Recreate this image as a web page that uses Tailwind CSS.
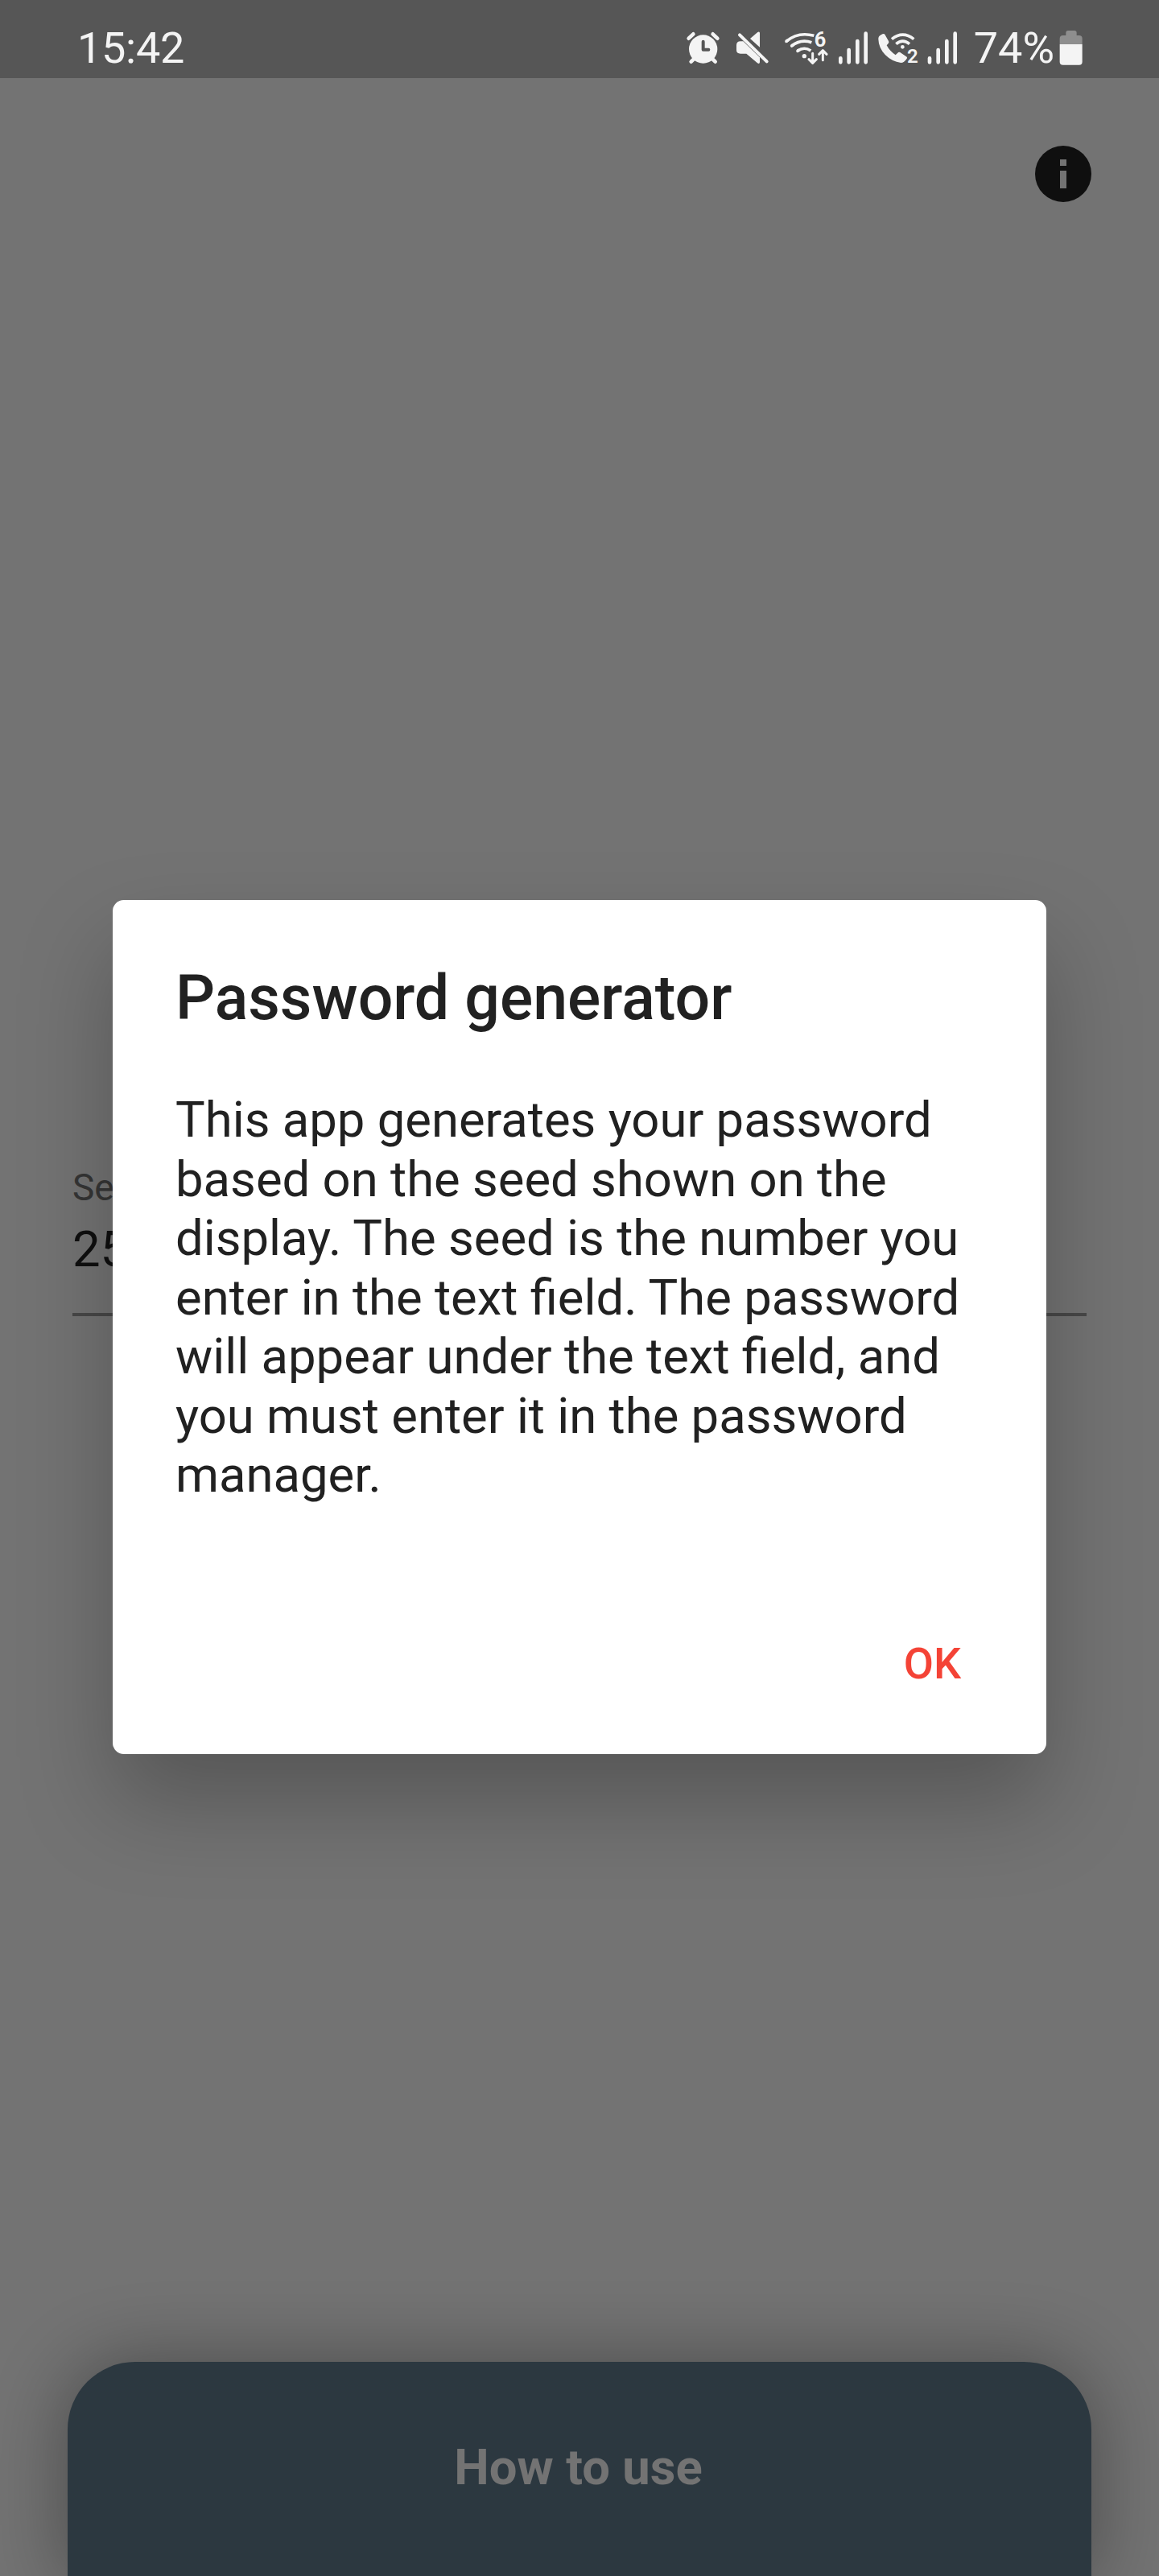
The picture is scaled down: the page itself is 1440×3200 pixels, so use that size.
<!DOCTYPE html>
<html lang="en">
<head>
<meta charset="utf-8">
<title>Password generator</title>
<script src="https://cdn.jsdelivr.net/npm/@tailwindcss/browser@4"></script>
</head>
<body class="bg-[#737373] font-['Roboto',sans-serif]">
<div class="relative flex h-[3200px] w-[1440px] flex-col overflow-hidden bg-[#737373]">
  <!-- Status bar -->
  <header class="flex h-[97px] shrink-0 items-center justify-between bg-[#565656] pt-[29px] pb-[6px] pl-[96px] pr-[94px] text-[#f4f4f4]">
    <span class="text-[54px] leading-[62px] tracking-[-0.3px]">15:42</span>
    <div class="flex items-center">
      <svg class="mr-[10px] h-[50px] w-[50px]" viewBox="30 45 150 150" fill="none" stroke="currentColor" stroke-linecap="round">
        <circle cx="101" cy="123" r="53" fill="currentColor" stroke="none"/>
        <path d="M47 83 64 67M154 83 137 67" stroke-width="14"/>
        <path d="M66 160 56 170M136 160 146 170" stroke-width="14"/>
        <path d="M101 95V125H121" stroke="#565656" stroke-width="12" stroke-linejoin="round"/>
      </svg>
      <svg class="mr-[10px] h-[50px] w-[50px]" viewBox="210 45 150 150" fill="currentColor">
        <path d="M276 84 304 60Q312 56 312 64V116ZM240 94H250L312 154V172Q311 180 303 175L262 140H240Q225 140 225 127V108Q225 94 240 94Z"/>
        <path d="M237 70 338 169" stroke="currentColor" stroke-width="12" stroke-linecap="round"/>
      </svg>
      <svg class="mr-[5px] h-[50px] w-[65px]" viewBox="390 45 195 150" fill="none" stroke="currentColor" stroke-width="11" stroke-linecap="round">
        <path d="M411 94Q455 57 514 73M431 111Q465 84 505 98M453 130Q477 112 502 129" stroke-linecap="butt"/>
        <path d="M411 94 415 91M431 111 435 108M453 130 457 127"/>
        <circle cx="478" cy="149" r="8" fill="currentColor" stroke="none"/>
        <path d="M509 139V173M495 161 509 175 523 161M547 164V130M533 142 547 128 561 142" stroke-width="9" stroke-linejoin="round"/>
        <text x="515" y="115" font-size="76" font-weight="700" fill="currentColor" stroke="none">6</text>
      </svg>
      <svg class="mr-[10px] h-[50px] w-[40px]" viewBox="600 45 120 150" stroke="currentColor" stroke-width="14" stroke-linecap="round">
        <path d="M613 157V172M644 126V172M676 93V172M707 65V172"/>
      </svg>
      <svg class="mr-[5px] h-[50px] w-[55px]" viewBox="30 45 165 150" fill="none" stroke="currentColor">
        <path d="M34 86Q33 76 44 70 54 63 58 68L72 93Q75 98 71 102L65 109Q76 130 98 145L106 137Q110 132 115 135L140 152Q143 155 139 160 130 174 118 174 85 170 60 145 35 118 34 86Z" fill="currentColor" stroke="none"/>
        <path d="M84 86Q125 53 166 86M100 104Q125 83 150 104" stroke-width="11"/>
        <circle cx="124" cy="115" r="7" fill="currentColor" stroke="none"/>
        <text x="141" y="175" font-size="72" font-weight="600" fill="currentColor" stroke="none">2</text>
      </svg>
      <svg class="mr-[20px] h-[50px] w-[40px]" viewBox="210 45 120 150" stroke="currentColor" stroke-width="14" stroke-linecap="round">
        <path d="M225 157V172M257 126V172M289 93V172M320 65V172"/>
      </svg>
      <span class="mr-[5px] text-[54px] leading-[62px]">74%</span>
      <svg class="h-[50px] w-[31px]" viewBox="703 45 93 150" fill="currentColor">
        <path d="M708 105V84Q708 72 720 72H731V62Q731 54 739 54H763Q771 54 771 62V72H780Q792 72 792 84V105Z" fill="#8e8e8e"/>
        <path d="M708 105H792V170Q792 182 780 182H720Q708 182 708 170Z"/>
      </svg>
    </div>
  </header>

  <main class="flex grow flex-col">
    <div class="flex justify-end pt-[84px] pr-[84px]">
      <svg class="h-[70px] w-[70px]" viewBox="0 0 70 70"><circle cx="35" cy="35" r="35" fill="#0f0f0f"/><path d="M31 17h8v8h-8zM31 31h8v22h-8z" fill="#737373"/></svg>
    </div>
    <div class="mt-[1197px] ml-[90px] w-[1260px] border-b-4 border-[#484848] pb-[42px]">
      <div class="text-[46px] leading-[54px] text-[#353535]">Seed</div>
      <div class="mt-[13px] text-[61.6px] leading-[74px] text-[#0f0f0f]">25</div>
    </div>
    <section class="mx-[84px] mt-auto flex h-[266px] justify-center rounded-t-[84px] bg-[#2c3840] pt-[94px] pr-[3px] shadow-[0_0_90px_6px_rgba(0,0,0,0.32)]">
      <h2 class="text-[61.6px] leading-[74px] font-bold text-[#737373]">How to use</h2>
    </section>
  </main>

  <!-- Dialog -->
  <div role="dialog" class="absolute top-[1118px] left-[140px] flex h-[1061px] w-[1160px] flex-col rounded-[14px] bg-white px-[78px] pt-[76px] text-[#212121] shadow-[0_60px_115px_rgba(0,0,0,0.25)]">
    <h1 class="text-[77px] leading-[92px] font-medium">Password generator</h1>
    <p class="mt-[69px] text-[61.6px] leading-[73.5px] whitespace-nowrap">This app generates your password<br>based on the seed shown on the<br>display. The seed is the number you<br>enter in the text field. The password<br>will appear under the text field, and<br>you must enter it in the password<br>manager.</p>
    <div class="mt-[165px] flex justify-end pr-[28px]">
      <button class="text-[54px] leading-[64px] font-medium text-[#f44336]">OK</button>
    </div>
  </div>
</div>
</body>
</html>
